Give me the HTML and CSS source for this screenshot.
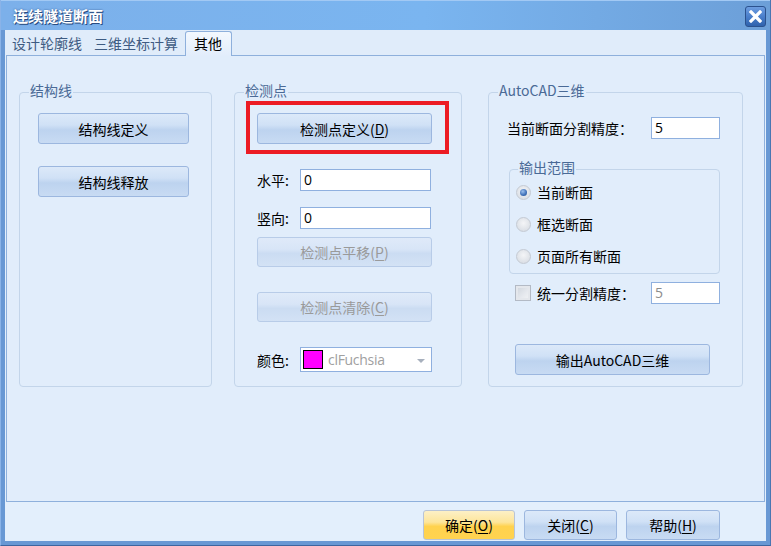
FILE: index.html
```html
<!DOCTYPE html>
<html lang="zh">
<head>
<meta charset="utf-8">
<title>连续隧道断面</title>
<link rel="stylesheet" href="styles.css">
</head>
<body>
<div class="window">
  <div class="titlebar">
    <span class="title">连续隧道断面</span>
    <span class="close">
      <svg width="13" height="13" viewBox="0 0 13 13"><path d="M2 2 L11 11 M11 2 L2 11" stroke="#fff" stroke-width="3.2" stroke-linecap="square"/></svg>
    </span>
  </div>
  <div class="client">
    <div class="tabs">
      <div class="tab">设计轮廓线</div>
      <div class="tab">三维坐标计算</div>
      <div class="tab active">其他</div>
    </div>
    <div class="page">
      <fieldset class="group g1">
        <legend class="legend">结构线</legend>
        <div class="body b1">
          <div class="btn w151">结构线定义</div>
          <div class="btn w151">结构线释放</div>
        </div>
      </fieldset>
      <fieldset class="group g2">
        <legend class="legend">检测点</legend>
        <div class="body b2">
          <div class="hl-wrap">
            <div class="btn w175">检测点定义(<u>D</u>)</div>
            <span class="highlight"></span>
          </div>
          <div class="row r-h">
            <span class="lbl">水平:</span>
            <span class="input">0</span>
          </div>
          <div class="row r-v">
            <span class="lbl">竖向:</span>
            <span class="input">0</span>
          </div>
          <div class="btn w175 disabled m-move">检测点平移(<u>P</u>)</div>
          <div class="btn w175 disabled m-clear">检测点清除(<u>C</u>)</div>
          <div class="row r-c">
            <span class="lbl">颜色:</span>
            <span class="combo">
              <span class="swatch"></span>
              <span class="ctext">clFuchsia</span>
              <span class="arrow"></span>
            </span>
          </div>
        </div>
      </fieldset>
      <fieldset class="group g3">
        <legend class="legend">AutoCAD三维</legend>
        <div class="body b3">
          <div class="row r-prec">
            <span class="lbl3">当前断面分割精度：</span>
            <span class="input small">5</span>
          </div>
          <fieldset class="subgroup">
            <legend class="legend sub">输出范围</legend>
            <div class="radios">
              <div class="radio-row"><span class="radio on"></span>当前断面</div>
              <div class="radio-row"><span class="radio"></span>框选断面</div>
              <div class="radio-row"><span class="radio"></span>页面所有断面</div>
            </div>
          </fieldset>
          <div class="row r-uni">
            <span class="check"></span>
            <span class="lbl-uni">统一分割精度：</span>
            <span class="input small grey">5</span>
          </div>
          <div class="btn w195 m-out">输出AutoCAD三维</div>
        </div>
      </fieldset>
    </div>
    <div class="bottombar">
      <div class="btn bb ok">确定(<u>O</u>)</div>
      <div class="btn bb">关闭(<u>C</u>)</div>
      <div class="btn bb help">帮助(<u>H</u>)</div>
    </div>
  </div>
</div>
</body>
</html>
```
FILE: styles.css
```css
body {
  margin: 0;
  font-family: "Noto Sans CJK SC", "Noto Sans", sans-serif;
  font-size: 14px;
  color: #000;
}

.window {
  width: 771px;
  height: 546px;
  box-sizing: border-box;
  background: #6898d4;
  border-left: 1px solid #8ab3e8;
  border-right: 1px solid #4a76b2;
  border-bottom: 1px solid #3d66a0;
  display: flex;
  flex-direction: column;
}

.titlebar {
  height: 30px;
  flex: none;
  box-sizing: border-box;
  border-top: 1px solid #a2c9f4;
  background: linear-gradient(90deg, #7cb0ea 0%, #7ab5f0 55%, #6c9fd8 100%);
  display: flex;
  align-items: center;
  justify-content: space-between;
  padding: 0 4px 0 12px;
}

.title {
  color: #fff;
  font-weight: bold;
  font-size: 15px;
  line-height: 20px;
  text-shadow: 1px 1px 0 #284c82, 0 0 2px #3a5f96;
}

.close {
  width: 21px;
  height: 21px;
  box-sizing: border-box;
  border: 1px solid #2b528e;
  border-radius: 3px;
  background: linear-gradient(#6d9de0 0%, #4a7fcb 50%, #2f62ad 100%);
  display: flex;
  align-items: center;
  justify-content: center;
  margin-top: 2px;
}

.client {
  flex: 1;
  margin: 0 4px 4px 4px;
  background: #e3effc;
  display: flex;
  flex-direction: column;
}

.tabs {
  height: 25px;
  flex: none;
  display: flex;
  align-items: flex-end;
  padding-left: 1px;
  background: #e0ecfa;
}

.tab {
  height: 24px;
  box-sizing: border-box;
  padding: 0 6px;
  line-height: 24px;
  color: #3e5b82;
}

.tab.active {
  height: 25px;
  margin-left: 1px;
  border: 1px solid #8eb0dc;
  border-bottom: none;
  border-radius: 3px 3px 0 0;
  background: linear-gradient(#f3f8fe, #e2edfb);
  color: #000;
  padding: 0 9px 0 8px;
  line-height: 23px;
  margin-bottom: -1px;
  position: relative;
  z-index: 1;
}

.page {
  height: 447px;
  flex: none;
  box-sizing: border-box;
  margin: 0 1px;
  border: 1px solid #8eb0dc;
  background: #e1edfb;
  display: flex;
  align-items: flex-start;
  padding: 25px 0 0 12px;
}

.group {
  margin: 0;
  padding: 0;
  border: 1px solid #c3d5ea;
  border-radius: 4px;
  box-sizing: border-box;
  height: 306px;
  min-width: 0;
}

.g1 { width: 193px; }
.g2 { width: 228px; margin-left: 22px; }
.g3 { width: 255px; margin-left: 26px; }

.legend {
  margin-left: 9px;
  padding: 0 1px 4px 1px;
  line-height: 18px;
  color: #4a6a96;
}

.body { padding-top: 10px; }
.b1 { padding-left: 18px; display: flex; flex-direction: column; gap: 22px; }
.b2 { padding-left: 22px; }
.b3 { padding-left: 18px; padding-top: 14px; }

.btn {
  box-sizing: border-box;
  height: 31px;
  border: 1px solid #9cb7df;
  border-radius: 3px;
  background: linear-gradient(#dce9f9 0%, #d0e1f6 38%, #bdd3ef 55%, #c8dbf3 100%);
  display: flex;
  align-items: center;
  justify-content: center;
  line-height: 18px;
}

.btn u { text-decoration: underline; text-underline-offset: 2px; }

.w151 { width: 151px; }
.w175 { width: 175px; }
.w195 { width: 195px; }

.btn.disabled {
  height: 30px;
  border-color: #b8cce8;
  background: linear-gradient(#dfeaf9 0%, #d8e5f7 40%, #cbdcf2 55%, #d3e2f5 100%);
  color: #9a9a9a;
}

.hl-wrap { position: relative; width: 175px; }

.highlight {
  position: absolute;
  left: -11px;
  top: -12px;
  width: 203px;
  height: 53px;
  box-sizing: border-box;
  border: 4px solid #ec1c24;
}

.row { display: flex; align-items: center; }

.lbl { width: 43px; line-height: 18px; }

.input {
  box-sizing: border-box;
  width: 131px;
  height: 22px;
  border: 1px solid #8fb0df;
  background: #fff;
  padding-left: 3px;
  line-height: 20px;
  font-family: "Open Sans", "Noto Sans", sans-serif;
  font-size: 14px;
}

.r-h { margin-top: 25px; }
.r-v { margin-top: 16px; }
.m-move { margin-top: 8px; }
.m-clear { margin-top: 25px; }
.r-c { margin-top: 25px; }

.combo {
  box-sizing: border-box;
  width: 132px;
  height: 25px;
  border: 1px solid #8fb0df;
  background: #fff;
  display: flex;
  align-items: center;
  padding-left: 2px;
}

.swatch {
  width: 20px;
  height: 19px;
  box-sizing: border-box;
  border: 1px solid #000;
  background: #ff00ff;
}

.ctext {
  margin-left: 5px;
  color: #a0a0a0;
  font-family: "Open Sans", "Noto Sans", sans-serif;
  font-size: 14px;
  flex: 1;
  letter-spacing: -0.3px;
}

.arrow {
  width: 0;
  height: 0;
  border-left: 4px solid transparent;
  border-right: 4px solid transparent;
  border-top: 4px solid #a7b0bd;
  margin-right: 6px;
  margin-top: 2px;
}

.lbl3 { width: 144px; line-height: 18px; }

.input.small { width: 69px; }
.input.grey { color: #8c8c8c; }

.subgroup {
  margin: 19px 0 0 2px;
  padding: 0;
  width: 211px;
  height: 116px;
  box-sizing: border-box;
  border: 1px solid #c3d5ea;
  border-radius: 4px;
  min-width: 0;
}

.legend.sub { margin-left: 8px; }

.radios {
  padding-left: 6px;
  display: flex;
  flex-direction: column;
  gap: 8px;
}

.radio-row {
  height: 24px;
  display: flex;
  align-items: center;
  line-height: 18px;
}

.radio {
  width: 15px;
  height: 15px;
  box-sizing: border-box;
  border-radius: 50%;
  border: 1px solid #c4cad3;
  background: radial-gradient(circle at 50% 40%, #f4f5f7 0%, #dde1e7 70%, #cfd4dc 100%);
  margin-right: 6px;
  display: flex;
  align-items: center;
  justify-content: center;
}

.radio.on::after {
  content: "";
  width: 7px;
  height: 7px;
  border-radius: 50%;
  background: radial-gradient(circle at 40% 35%, #9cc0ee 0%, #3d6fb8 60%, #284f8e 100%);
}

.r-uni { margin-top: 8px; margin-left: 8px; }

.check {
  width: 16px;
  height: 16px;
  box-sizing: border-box;
  border: 1px solid #b3bac5;
  background: linear-gradient(135deg, #cdd3db 0%, #e6e9ee 60%, #f3f4f6 100%);
  box-shadow: inset 0 0 0 2px #e4e7ec;
  margin-right: 6px;
}

.lbl-uni { width: 114px; line-height: 18px; }

.m-out { margin-top: 40px; margin-left: 8px; }

.bottombar {
  flex: 1;
  display: flex;
  justify-content: flex-end;
  align-items: flex-start;
  gap: 9px;
  padding: 8px 46px 0 0;
}

.btn.bb {
  width: 93px;
  height: 30px;
}

.btn.help { width: 94px; }

.btn.ok {
  width: 92px;
  border-color: #b9c4d6;
  background: linear-gradient(#fdf0c6 0%, #fde59a 40%, #ffd24e 55%, #ffd350 100%);
}
```
